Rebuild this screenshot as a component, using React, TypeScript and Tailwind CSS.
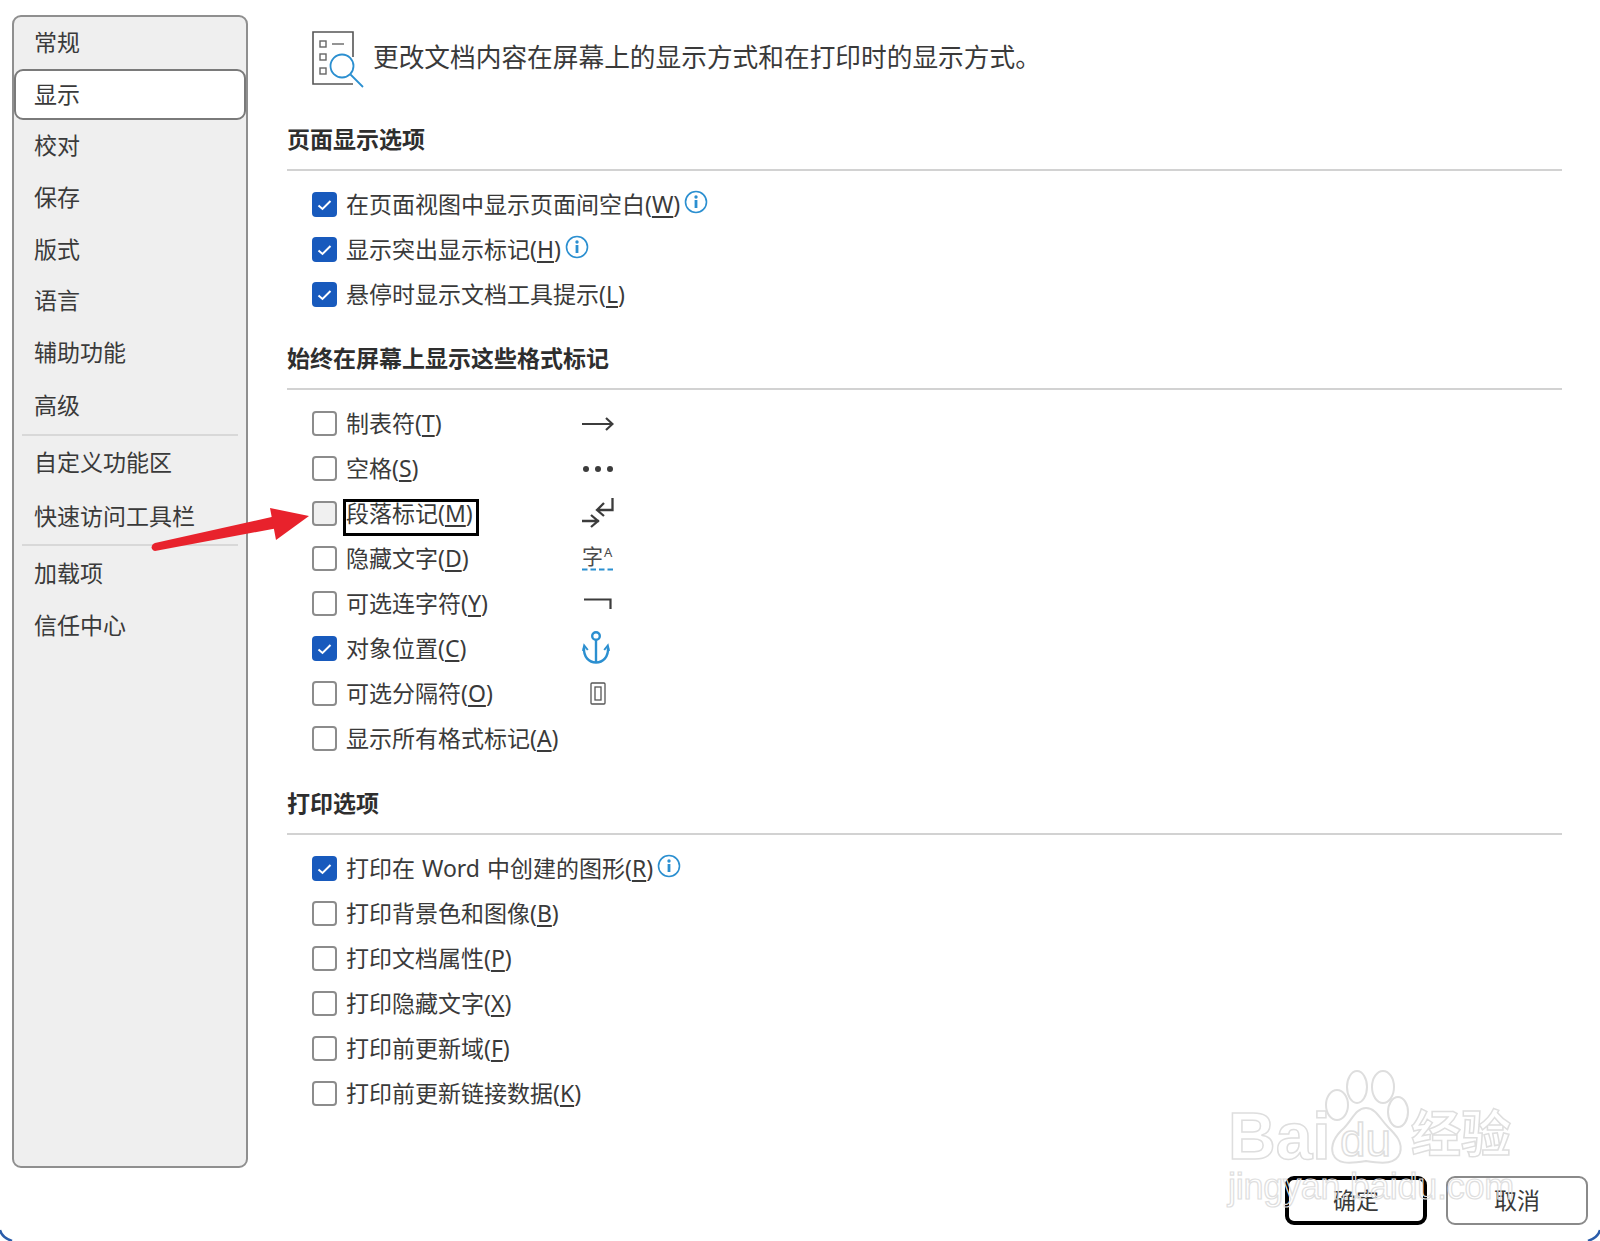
const fontStack = { fontFamily: '"Noto Sans", "Noto Sans CJK SC", sans-serif' };

const navTop = ["常规", "显示", "校对", "保存", "版式", "语言", "辅助功能"];

function Key({ children }: { children: string }) {
  return <span className="underline underline-offset-[3px] decoration-[1.5px]">{children}</span>;
}

function NavItem({ label, active, extra }: { label: string; active?: boolean; extra?: string }) {
  return (
    <div
      className={
        active
          ? "h-[51.6px] flex items-center pl-[18px] bg-white border-2 border-[#7a7a7a] rounded-[9px]"
          : `h-[51.6px] flex items-center pl-[20px] ${extra || ""}`
      }
    >
      {label}
    </div>
  );
}

function Checkbox({ checked, hover }: { checked?: boolean; hover?: boolean }) {
  if (checked) {
    return (
      <span className="w-[25px] h-[25px] shrink-0 rounded-[4px] bg-[#185abd] flex items-center justify-center">
        <svg width="15" height="12" viewBox="0 0 15 12" fill="none">
          <path d="M1.5 6.5 L5.5 10 L13.5 2" stroke="white" strokeWidth="2" />
        </svg>
      </span>
    );
  }
  return (
    <span
      className={
        hover
          ? "w-[25px] h-[25px] shrink-0 rounded-[4px] border-2 border-[#8c8c8c] bg-[#f0f0f0]"
          : "w-[25px] h-[25px] shrink-0 rounded-[4px] border-2 border-[#8c8c8c] bg-white"
      }
    />
  );
}

function Info() {
  return (
    <svg width="24" height="24" viewBox="0 0 24 24" fill="none" className="ml-[4px] mb-[6px] shrink-0">
      <circle cx="12" cy="12" r="10.5" stroke="#2b8fd0" strokeWidth="1.6" />
      <rect x="10.6" y="10" width="2.8" height="8" fill="#2b8fd0" />
      <circle cx="12" cy="7" r="1.7" fill="#2b8fd0" />
    </svg>
  );
}

function Row({
  label,
  k,
  checked,
  info,
  symbol,
  hover,
  boxed,
}: {
  label: string;
  k: string;
  checked?: boolean;
  info?: boolean;
  symbol?: React.ReactNode;
  hover?: boolean;
  boxed?: boolean;
}) {
  return (
    <div className="h-[45px] flex items-center pl-[25px]">
      <Checkbox checked={checked} hover={hover} />
      <div className={symbol ? "w-[245px] pl-[9px] flex items-center shrink-0" : "pl-[9px] flex items-center"}>
        <span
          className={
            boxed
              ? "outline-[3.5px] outline-black h-[31px] flex items-center pr-[3px] pb-[7px] mt-[7px]"
              : "[word-spacing:1px]"
          }
        >
          {label}(<Key>{k}</Key>)
        </span>
        {info && <Info />}
      </div>
      {symbol}
    </div>
  );
}

function Section({ title, children }: { title: string; children: React.ReactNode }) {
  return (
    <section>
      <h2 className="h-[36px] flex items-center font-bold text-[#2e2e2e]">{title}</h2>
      <div className="h-[2px] bg-[#d2d2d2] mt-[12px] mb-[11px]" />
      {children}
    </section>
  );
}

const TabArrow = (
  <svg width="32" height="16" viewBox="0 0 32 16" fill="none" stroke="#3c3c3c" strokeWidth="2.2">
    <path d="M0 8 H30 M24 2 L30.5 8 L24 14" />
  </svg>
);

const Dots = (
  <svg width="32" height="8" viewBox="0 0 32 8" fill="#3c3c3c">
    <circle cx="4" cy="4" r="3" />
    <circle cx="16" cy="4" r="3" />
    <circle cx="28" cy="4" r="3" />
  </svg>
);

const ParaMark = (
  <svg width="32" height="30" viewBox="0 0 32 30" fill="none" stroke="#3c3c3c" strokeWidth="2.3" className="-mt-[1px]">
    <path d="M30.5 0 V12 H15 M22 5 L15 12 L22 18" />
    <path d="M0 23 H17 M9 17 L16 23 L9 29" />
  </svg>
);

const HiddenMark = (
  <div className="w-[32px] flex flex-col items-stretch -mt-[2px]">
    <div className="flex items-start h-[22px] leading-none">
      <span className="text-[21px] leading-[22px] text-[#4a4a4a]">字</span>
      <span className="text-[13px] leading-[14px] ml-[1px] text-[#4a4a4a]">A</span>
    </div>
    <svg width="32" height="3" viewBox="0 0 32 3" className="mt-[1px]">
      <path d="M0 1.5 H32" stroke="#2b8fd0" strokeWidth="1.8" strokeDasharray="5.5 3" />
    </svg>
  </div>
);

const LigatureMark = (
  <svg width="28" height="12" viewBox="0 0 28 12" fill="none" stroke="#3c3c3c" strokeWidth="2.2" className="ml-[2px]">
    <path d="M0 1.5 H26.5 V11" />
  </svg>
);

const Anchor = (
  <svg width="28" height="34" viewBox="0 0 28 34" fill="none" stroke="#2b8fd0" strokeWidth="2.4" className="-mt-[2px]">
    <circle cx="14" cy="5" r="3.8" />
    <path d="M14 9 V31.5" />
    <path d="M2 17 C1.5 26 7 31.5 14 31.5 C21 31.5 26.5 26 26 17" />
    <path d="M1 20 L2.2 14.5 L5.8 19 M27 20 L25.8 14.5 L22.2 19" strokeWidth="2" />
  </svg>
);

const BreakMark = (
  <svg width="16" height="23" viewBox="0 0 16 23" fill="none" stroke="#555" strokeWidth="1.3" className="ml-[8px]">
    <rect x="1" y="1" width="14" height="21" rx="1" />
    <rect x="5" y="5" width="6" height="13" />
  </svg>
);

export default function App() {
  return (
    <div
      className="relative w-[1600px] h-[1241px] overflow-hidden bg-white text-[23px] leading-none text-[#3a3a3a] flex"
      style={fontStack}
    >
      {/* left nav */}
      <aside className="w-[236px] h-[1153px] mt-[15px] ml-[12px] shrink-0 bg-[#efefef] border-2 border-[#8f8f8f] rounded-[9px]">
        {navTop.map((n) => (
          <NavItem key={n} label={n} active={n === "显示"} />
        ))}
        <NavItem label="高级" extra="mt-[2px]" />
        <div className="h-[2px] bg-[#d8d8d8] mx-[8px] mt-[2px] mb-[1px]" />
        <NavItem label="自定义功能区" />
        <NavItem label="快速访问工具栏" extra="mt-[2px]" />
        <div className="h-[2px] bg-[#d8d8d8] mx-[8px] mt-[2px] mb-[2px]" />
        <NavItem label="加载项" />
        <NavItem label="信任中心" />
      </aside>

      {/* main */}
      <main className="ml-[39px] w-[1275px] shrink-0 pt-[31px]">
        <div className="flex items-center pl-[25px] h-[58px]">
          <svg width="52" height="58" viewBox="0 0 52 58" fill="none" className="shrink-0">
            <path d="M41 26 V1 H1 V53 H41" stroke="#555" strokeWidth="1.6" />
            <rect x="8" y="10" width="6" height="6" stroke="#666" strokeWidth="1.4" />
            <rect x="8" y="23" width="6" height="6" stroke="#666" strokeWidth="1.4" />
            <rect x="8" y="37" width="6" height="6" stroke="#666" strokeWidth="1.4" />
            <path d="M20 13 H32" stroke="#666" strokeWidth="1.4" />
            <circle cx="30" cy="35" r="11.5" stroke="#2b8fd0" strokeWidth="1.8" />
            <path d="M38.5 43.5 L51 56" stroke="#2b8fd0" strokeWidth="1.8" />
          </svg>
          <span className="ml-[9px] pb-[4px] text-[25.7px]">更改文档内容在屏幕上的显示方式和在打印时的显示方式。</span>
        </div>

        <div className="mt-[32px]">
          <Section title="页面显示选项">
            <Row label="在页面视图中显示页面间空白" k="W" checked info />
            <Row label="显示突出显示标记" k="H" checked info />
            <Row label="悬停时显示文档工具提示" k="L" checked />
          </Section>
        </div>

        <div className="mt-[23px]">
          <Section title="始终在屏幕上显示这些格式标记">
            <Row label="制表符" k="T" symbol={TabArrow} />
            <Row label="空格" k="S" symbol={Dots} />
            <Row label="段落标记" k="M" symbol={ParaMark} hover boxed />
            <Row label="隐藏文字" k="D" symbol={HiddenMark} />
            <Row label="可选连字符" k="Y" symbol={LigatureMark} />
            <Row label="对象位置" k="C" checked symbol={Anchor} />
            <Row label="可选分隔符" k="O" symbol={BreakMark} />
            <Row label="显示所有格式标记" k="A" />
          </Section>
        </div>

        <div className="mt-[24px]">
          <Section title="打印选项">
            <Row label="打印在 Word 中创建的图形" k="R" checked info />
            <Row label="打印背景色和图像" k="B" />
            <Row label="打印文档属性" k="P" />
            <Row label="打印隐藏文字" k="X" />
            <Row label="打印前更新域" k="F" />
            <Row label="打印前更新链接数据" k="K" />
          </Section>
        </div>
      </main>

      {/* footer buttons sit over the dialog's bottom right */}
      <div className="absolute right-[12px] bottom-[16px] flex gap-[19px]">
        <button className="w-[142px] h-[49px] rounded-[9px] border-[4px] border-black bg-white text-[#3a3a3a]">确定</button>
        <button className="w-[142px] h-[49px] rounded-[9px] border-2 border-[#8a8a8a] bg-white text-[#3a3a3a]">取消</button>
      </div>

      {/* red annotation arrow */}
      <svg className="absolute left-0 top-0 pointer-events-none" width="330" height="570" viewBox="0 0 330 570">
        <path d="M155 543 C151 544 150 550 155 551 L278 528 L276 516 Z" fill="#e8222c" />
        <path d="M309 516 L270 508 L276 540 Z" fill="#e8222c" />
      </svg>

      {/* baidu watermark */}
      <div className="absolute left-[1225px] top-[1065px] w-[300px] h-[145px] pointer-events-none font-['Liberation_Sans',sans-serif]">
        <svg className="absolute left-0 top-0" width="300" height="145" viewBox="1225 1065 300 145" fill="none" stroke="#dedede" strokeWidth="2">
          <ellipse cx="1337" cy="1105" rx="11" ry="15" />
          <ellipse cx="1357" cy="1087" rx="10" ry="16" />
          <ellipse cx="1383" cy="1087" rx="11" ry="16" />
          <ellipse cx="1398" cy="1112" rx="10" ry="15" />
          <path d="M1366 1108 C1356 1108 1352 1120 1344 1128 C1335 1136 1330 1144 1333 1154 C1337 1164 1348 1164 1366 1161 C1384 1164 1396 1164 1400 1153 C1403 1142 1396 1135 1388 1127 C1380 1119 1376 1108 1366 1108 Z" />
        </svg>
        <span className="absolute left-[3px] top-[38px] text-[66px] leading-none font-bold text-transparent [-webkit-text-stroke:1.5px_#dedede]">Bai</span>
        <span className="absolute left-[115px] top-[52px] text-[46px] leading-none text-transparent [-webkit-text-stroke:1.5px_#dedede]">du</span>
        <span className="absolute left-[186px] top-[40px] text-[50px] leading-none font-bold text-transparent [-webkit-text-stroke:1.5px_#dedede] font-['Noto_Sans_CJK_SC',sans-serif]">经验</span>
        <span className="absolute left-[3px] top-[104px] text-[36px] tracking-[-0.25px] leading-none text-transparent [-webkit-text-stroke:1.2px_#dedede] whitespace-nowrap">jingyan.baidu.com</span>
      </div>

      {/* window corners */}
      <svg className="absolute left-0 bottom-0" width="14" height="14" viewBox="0 0 14 14" fill="none">
        <path d="M0 3 C1 7 4 11 12 14" stroke="#2a5caa" strokeWidth="2.5" />
      </svg>
      <svg className="absolute right-0 bottom-0" width="14" height="14" viewBox="0 0 14 14" fill="none">
        <path d="M14 3 C13 7 10 11 2 14" stroke="#2a5caa" strokeWidth="2.5" />
      </svg>
    </div>
  );
}
